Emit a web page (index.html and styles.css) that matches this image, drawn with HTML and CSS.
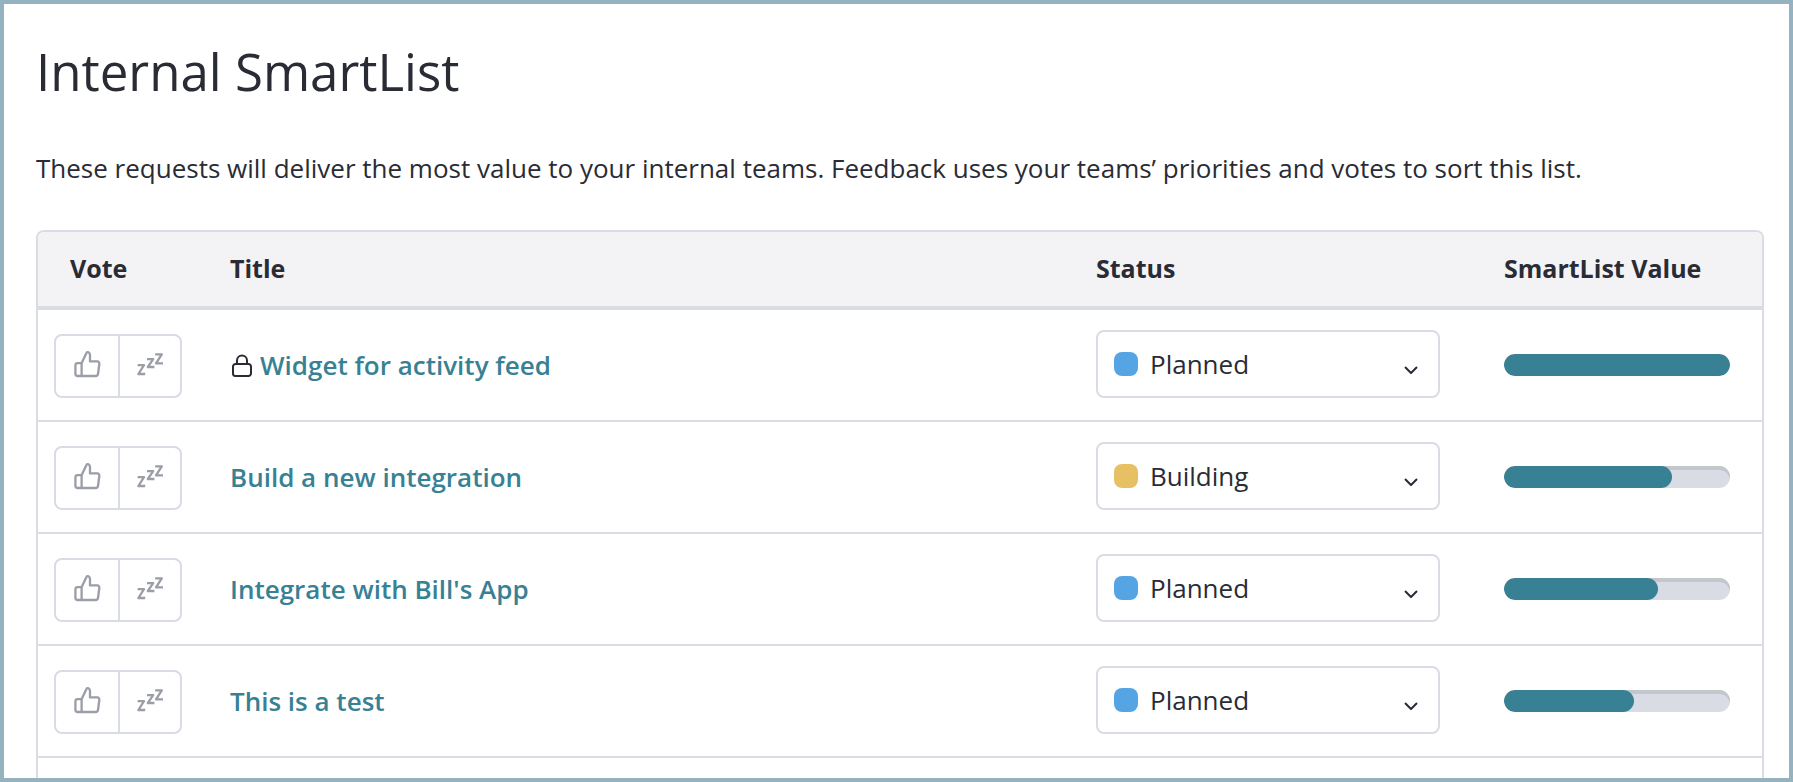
FILE: index.html
```
<!DOCTYPE html>
<html lang="en">
<head>
    <meta charset="utf-8">
    <title>Internal SmartList</title>
    <link rel="stylesheet" href="styles.css">
</head>
<body>
    <!-- Shared icons -->
    <svg class="icon-defs" aria-hidden="true">
        <symbol id="icon-thumb" viewBox="0 0 28 28">
            <path d="M8.6 13.2 13.2 3.4C13.9 1.9 15.2 1.8 16.1 2.7C16.8 3.4 17 4.4 17 5.4V11.4H24.2C25.7 11.4 26.5 12.5 26.3 14L25.1 23.6C24.9 25.2 24 26 22.6 26H4.6C3.2 26 2.4 25.2 2.4 23.8V15.4C2.4 14 3.2 13.2 4.6 13.2H8.6ZM8.6 13.2V26"/>
        </symbol>
        <symbol id="icon-snooze" viewBox="0 0 28 28">
            <path d="M1.6 15.2H8L2.4 24H9.2M11 9.2H17.2L11.8 17H18.4M19.2 4.4H25.8L20 13.4H27"/>
        </symbol>
        <symbol id="icon-lock" viewBox="0 0 22 24">
            <path d="M5.5 11H18.5A2.5 2.5 0 0 1 21 13.5V20.5A2.5 2.5 0 0 1 18.5 23H5.5A2.5 2.5 0 0 1 3 20.5V13.5A2.5 2.5 0 0 1 5.5 11M7 11V7.5A5 5 0 0 1 17 7.5V11"/>
        </symbol>
        <symbol id="icon-chevron" viewBox="0 0 14 8">
            <path d="M1 1 7 7 13 1"/>
        </symbol>
    </svg>

    <div class="container">
        <h1>Internal SmartList</h1>
        <p class="intro">These requests will deliver the most value to your internal teams. Feedback uses your teams’ priorities and votes to sort this list.</p>

        <div class="table-wrap">
            <table>
                <thead>
                    <tr>
                        <th class="vote-col">Vote</th>
                        <th>Title</th>
                        <th class="status-col">Status</th>
                        <th class="value-col">SmartList Value</th>
                    </tr>
                </thead>
                <tbody>
                    <tr>
                        <td class="vote-cell">
                            <div class="vote">
                                <button type="button" aria-label="Vote up"><svg class="icon"><use href="#icon-thumb"/></svg></button>
                                <button type="button" aria-label="Snooze"><svg class="icon"><use href="#icon-snooze"/></svg></button>
                            </div>
                        </td>
                        <td>
                            <div class="title">
                                <svg class="lock"><use href="#icon-lock"/></svg>
                                <a href="#">Widget for activity feed</a>
                            </div>
                        </td>
                        <td class="status-cell">
                            <div class="status planned">
                                <select aria-label="Status">
                                    <option selected>Planned</option>
                                    <option>Building</option>
                                </select>
                                <svg class="chevron"><use href="#icon-chevron"/></svg>
                            </div>
                        </td>
                        <td><div class="bar"><div class="bar-fill" style="width: 100%"></div></div></td>
                    </tr>
                    <tr>
                        <td class="vote-cell">
                            <div class="vote">
                                <button type="button" aria-label="Vote up"><svg class="icon"><use href="#icon-thumb"/></svg></button>
                                <button type="button" aria-label="Snooze"><svg class="icon"><use href="#icon-snooze"/></svg></button>
                            </div>
                        </td>
                        <td>
                            <div class="title"><a href="#">Build a new integration</a></div>
                        </td>
                        <td class="status-cell">
                            <div class="status building">
                                <select aria-label="Status">
                                    <option>Planned</option>
                                    <option selected>Building</option>
                                </select>
                                <svg class="chevron"><use href="#icon-chevron"/></svg>
                            </div>
                        </td>
                        <td><div class="bar"><div class="bar-fill" style="width: 74.4%"></div></div></td>
                    </tr>
                    <tr>
                        <td class="vote-cell">
                            <div class="vote">
                                <button type="button" aria-label="Vote up"><svg class="icon"><use href="#icon-thumb"/></svg></button>
                                <button type="button" aria-label="Snooze"><svg class="icon"><use href="#icon-snooze"/></svg></button>
                            </div>
                        </td>
                        <td>
                            <div class="title"><a href="#">Integrate with Bill's App</a></div>
                        </td>
                        <td class="status-cell">
                            <div class="status planned">
                                <select aria-label="Status">
                                    <option selected>Planned</option>
                                    <option>Building</option>
                                </select>
                                <svg class="chevron"><use href="#icon-chevron"/></svg>
                            </div>
                        </td>
                        <td><div class="bar"><div class="bar-fill" style="width: 68%"></div></div></td>
                    </tr>
                    <tr>
                        <td class="vote-cell">
                            <div class="vote">
                                <button type="button" aria-label="Vote up"><svg class="icon"><use href="#icon-thumb"/></svg></button>
                                <button type="button" aria-label="Snooze"><svg class="icon"><use href="#icon-snooze"/></svg></button>
                            </div>
                        </td>
                        <td>
                            <div class="title"><a href="#">This is a test</a></div>
                        </td>
                        <td class="status-cell">
                            <div class="status planned">
                                <select aria-label="Status">
                                    <option selected>Planned</option>
                                    <option>Building</option>
                                </select>
                                <svg class="chevron"><use href="#icon-chevron"/></svg>
                            </div>
                        </td>
                        <td><div class="bar"><div class="bar-fill" style="width: 57.5%"></div></div></td>
                    </tr>
                </tbody>
            </table>
        </div>
    </div>
</body>
</html>
```
FILE: styles.css
```
* {
    box-sizing: border-box;
}
body {
    margin: 0;
    font-family: "Open Sans", sans-serif;
    font-size: 26px;
    line-height: 36px;
    color: #2a2c35;
    background-color: #fff;
}
.icon-defs {
    display: none;
}
.container {
    display: flex;
    flex-direction: column;
    height: 100vh;
    padding: 32px 25px 0 32px;
    border: 4px solid #94b2bf;
    overflow: hidden;
}
h1 {
    margin: 0 0 44px;
    font-size: 51px;
    font-weight: 400;
    line-height: 70px;
}
.intro {
    margin: 0 0 44px;
}

/* Table */
.table-wrap {
    flex: 1;
    border: 2px solid #dadce4;
    border-bottom: none;
    border-radius: 8px 8px 0 0;
    overflow: hidden;
}
table {
    width: 100%;
    border-spacing: 0;
    table-layout: fixed;
}
th {
    padding: 18px 32px 20px;
    text-align: left;
    font-size: 25px;
    font-weight: 700;
    background-color: #f3f3f6;
    border-bottom: 4px solid #dadce4;
}
td {
    padding: 21px 32px;
    border-bottom: 2px solid #dadce4;
}
.vote-col {
    width: 160px;
}
.status-col {
    width: 408px;
}
.value-col {
    width: 290px;
}
.vote-cell {
    padding: 24px 16px 22px;
}
.status-cell {
    padding: 20px 32px 22px;
}

/* Vote buttons */
.vote {
    display: flex;
    height: 64px;
    border: 2px solid #dadce4;
    border-radius: 8px;
}
.vote button {
    width: 50%;
    display: flex;
    align-items: center;
    justify-content: center;
    padding: 0 0 4px;
    border: none;
    background: none;
    color: #9b9da7;
    cursor: pointer;
}
.vote button + button {
    border-left: 2px solid #dadce4;
}
svg {
    fill: none;
    stroke: currentColor;
    stroke-width: 2;
    stroke-linejoin: round;
}
.icon {
    width: 28px;
    height: 28px;
    stroke-width: 2.3;
}

/* Title */
.title {
    display: flex;
    align-items: center;
    gap: 8px;
}
.title a {
    font-weight: 600;
    color: #388194;
    text-decoration: none;
}
.title a:hover {
    text-decoration: underline;
}
.lock {
    width: 22px;
    height: 24px;
}

/* Status drop-down */
.status {
    position: relative;
}
.status::before {
    content: "";
    position: absolute;
    top: 22px;
    left: 18px;
    width: 24px;
    height: 24px;
    border-radius: 8px;
    pointer-events: none;
}
.planned::before {
    background-color: #55a5e5;
}
.building::before {
    background-color: #e8c064;
}
.status select {
    display: block;
    width: 100%;
    height: 68px;
    padding: 0 48px 0 52px;
    border: 2px solid #dadce4;
    border-radius: 8px;
    font: inherit;
    color: inherit;
    background-color: #fff;
    appearance: none;
}
.chevron {
    position: absolute;
    top: 36px;
    right: 22px;
    width: 14px;
    height: 8px;
    pointer-events: none;
}

/* Value bar */
.bar {
    height: 22px;
    border-radius: 11px;
    background-color: #d9dce4;
    box-shadow: inset 0 4px 0 #c3c6cb;
    overflow: hidden;
}
.bar-fill {
    height: 100%;
    border-radius: 11px;
    background-color: #388194;
}
```
